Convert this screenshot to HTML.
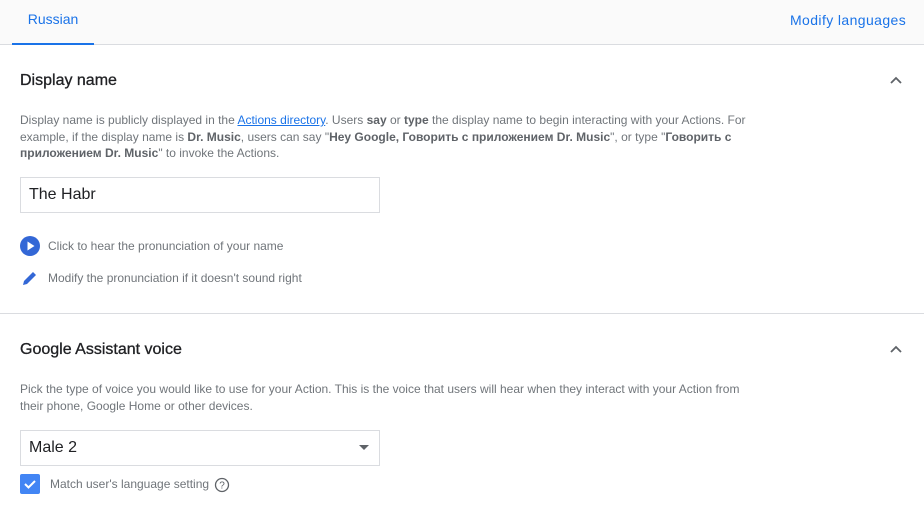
<!DOCTYPE html>
<html><head><meta charset="utf-8"><style>
*{margin:0;padding:0;box-sizing:border-box}
body{width:924px;height:514px;overflow:hidden;background:#fff;font-family:"Liberation Sans","Noto Sans CJK SC",sans-serif;color:#202124;position:relative}
.abs{position:absolute;white-space:nowrap}
.top{position:absolute;left:0;top:0;width:924px;height:45px;background:#fafafa;border-bottom:1px solid #dadce0}
.tab{left:12px;top:0;width:82px;height:45px;border-bottom:2px solid #1a73e8;color:#1a73e8;font-size:14px;text-align:center;line-height:38px}
.h{font-size:16px;color:#202124;-webkit-text-stroke:0.3px #202124}
.p{font-size:12px;color:#70757a;line-height:16.5px;letter-spacing:0}
.p b{color:#5f6368}
.p a{color:#1a73e8;text-decoration:underline}
.box{position:absolute;left:20px;width:360px;height:36px;border:1px solid #dadce0;font-size:16px;padding-left:8px;line-height:34px}
.chev{position:absolute;left:889px;width:14px;height:14px}
</style></head><body>
<div class="top"></div>
<div class="abs tab">Russian</div>
<div class="abs" style="left:790px;top:12px;font-size:14px;color:#1a73e8;letter-spacing:0.4px">Modify languages</div>

<div class="abs h" style="left:20px;top:72px">Display name</div>
<svg class="chev" style="top:74px" viewBox="0 0 14 14"><path d="M2 9l5-5 5 5" fill="none" stroke="#5f6368" stroke-width="1.8"/></svg>
<div class="abs p" style="left:20px;top:112px">Display name is publicly displayed in the <a>Actions directory</a>. Users <b>say</b> or <b>type</b> the display name to begin interacting with your Actions. For<br>example, if the display name is <b>Dr. Music</b>, users can say "<b>Hey Google, Говорить с приложением Dr. Music</b>", or type "<b>Говорить с</b><br><b>приложением Dr. Music</b>" to invoke the Actions.</div>
<div class="box" style="top:177px">The Habr</div>
<svg class="abs" style="left:20px;top:236px" width="20" height="20" viewBox="0 0 20 20"><circle cx="10" cy="10" r="10" fill="#3367d6"/><path d="M7.5 5.5v9l7-4.5z" fill="#fff"/></svg>
<div class="abs p" style="left:48px;top:238px">Click to hear the pronunciation of your name</div>
<svg class="abs" style="left:22px;top:270px" width="16" height="16" viewBox="0 0 16 16"><path d="M1 15l1-4 9-9 3 3-9 9z" fill="#3367d6"/></svg>
<div class="abs p" style="left:48px;top:270px">Modify the pronunciation if it doesn't sound right</div>

<div class="abs" style="left:0;top:313px;width:924px;height:1px;background:#dadce0"></div>

<div class="abs h" style="left:20px;top:341px">Google Assistant voice</div>
<svg class="chev" style="top:343px" viewBox="0 0 14 14"><path d="M2 9l5-5 5 5" fill="none" stroke="#5f6368" stroke-width="1.8"/></svg>
<div class="abs p" style="left:20px;top:381px">Pick the type of voice you would like to use for your Action. This is the voice that users will hear when they interact with your Action from<br>their phone, Google Home or other devices.</div>
<div class="box" style="top:430px">Male 2</div>
<svg class="abs" style="left:358px;top:445px" width="12" height="6" viewBox="0 0 12 6"><path d="M1 0h10L6 5z" fill="#5f6368"/></svg>
<div class="abs" style="left:20px;top:474px;width:20px;height:20px;background:#4285f4;border-radius:2px"></div>
<svg class="abs" style="left:20px;top:474px" width="20" height="20" viewBox="0 0 20 20"><path d="M5 10l3.5 3.5L15 7" fill="none" stroke="#fff" stroke-width="2"/></svg>
<div class="abs p" style="left:50px;top:476px">Match user's language setting</div>
<svg class="abs" style="left:214px;top:477px" width="16" height="16" viewBox="0 0 16 16"><circle cx="8" cy="8" r="6.5" fill="none" stroke="#5f6368" stroke-width="1.3"/><text x="8" y="11.5" font-size="10" text-anchor="middle" fill="#5f6368" font-family="Liberation Sans">?</text></svg>
</body></html>
